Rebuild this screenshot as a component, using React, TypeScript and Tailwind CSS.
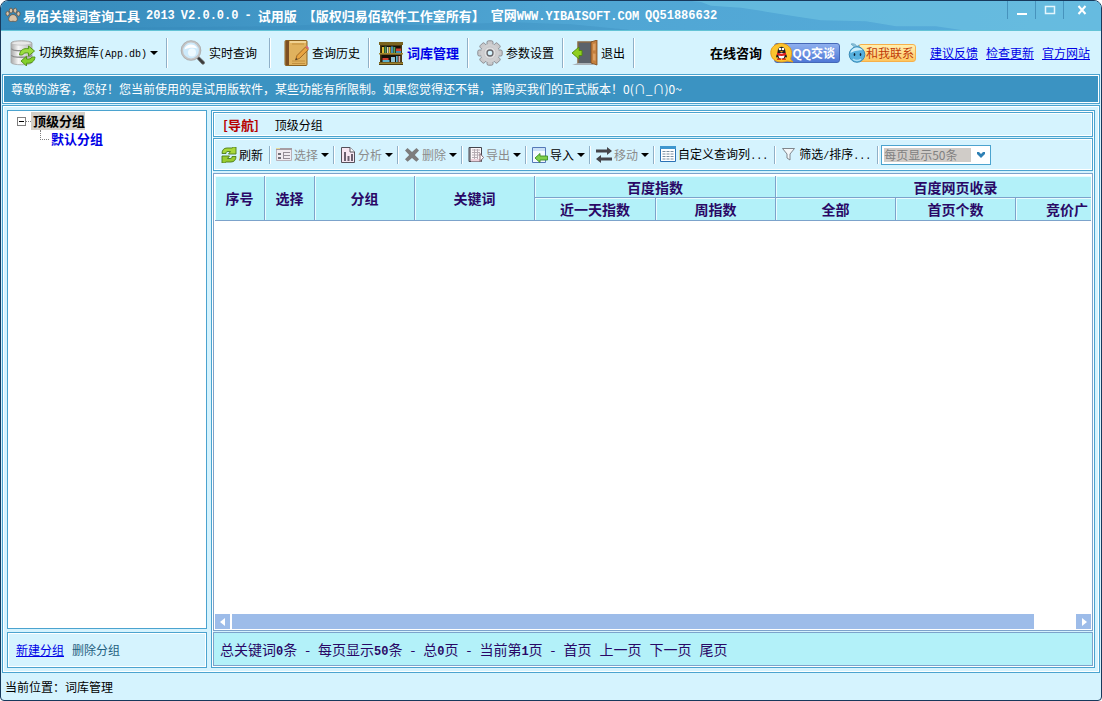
import React, { useState } from 'react';

interface ToolItem {
  label: string;
  icon: React.ReactNode;
  disabled?: boolean;
  menu?: boolean;
}

// Small black triangle used on every drop-down button
const Caret = () => (
  <svg className="w-2 h-1 shrink-0" viewBox="0 0 8 4">
    <path d="M0 0h8L4 4z" fill="#000" />
  </svg>
);

const Separator = () => <span className="h-full w-0.5 shrink-0 border-l border-[#8fb0c8] bg-white" />;

const Mono = ({ children }: { children: React.ReactNode }) => (
  <span className="font-['Liberation_Mono',monospace] text-[10px]">{children}</span>
);

/* ---------- Main toolbar icons ---------- */

const PawIcon = () => (
  <svg className="w-4 h-4 shrink-0" viewBox="0 0 16 16">
    <g fill="#d9c3a8" stroke="#5d5348" strokeWidth="0.8">
      <ellipse cx="2.6" cy="6.6" rx="1.7" ry="2.3" />
      <ellipse cx="6" cy="3.6" rx="1.7" ry="2.5" />
      <ellipse cx="10.2" cy="3.6" rx="1.7" ry="2.5" />
      <ellipse cx="13.4" cy="6.8" rx="1.7" ry="2.3" />
      <path d="M8 7.5c2.6 0 4.8 3 4.3 5.4-.4 1.8-2.4 1.8-4.3 1.3-1.9.5-3.9.5-4.3-1.3C3.200 10.500 5.400 7.500 8 7.500z" />
    </g>
  </svg>
);

const DatabaseIcon = () => (
  <svg className="w-[26px] h-[26px] shrink-0" viewBox="0 0 26 26">
    <defs>
      <linearGradient id="db" x1="0" x2="1">
        <stop offset="0" stopColor="#a9a9a9" />
        <stop offset="0.35" stopColor="#f6f6f6" />
        <stop offset="1" stopColor="#b4b4b4" />
      </linearGradient>
    </defs>
    <path d="M1 3c0-3 21-3 21 0v19.500c0 3-21 3-21 0z" fill="url(#db)" stroke="#a4a4a4" strokeWidth="0.8" />
    <ellipse cx="11.500" cy="3.200" rx="9.800" ry="2" fill="#e9e9e9" stroke="#b5b5b5" strokeWidth="0.6" />
    <path d="M1.500 8.500c0 3 20 3 20 0M1.500 15c0 3 20 3 20 0" fill="none" stroke="#8c8c8c" strokeWidth="1.300" />
    <path d="M9.500 15c.5-5 4-7 9-6.300V6l6 5-6 5v-3c-3-.5-5 0-6 2z" fill="#9bdd40" stroke="#4c8f12" strokeWidth="0.9" />
    <path d="M25 17c-.5 5-4 6.500-8.500 6.200V26l-5.500-5 5.500-4.700v2.700c3 .3 4.500-.2 5.500-2z" fill="#84d02c" stroke="#4c8f12" strokeWidth="0.9" />
  </svg>
);

const SearchIcon = () => (
  <svg className="w-[26px] h-[26px] shrink-0" viewBox="0 0 26 26">
    <path d="M16.500 18l2-1.800 5.800 5.600c1 1.600-.8 3.200-2.300 2.200z" fill="#3c3c3c" stroke="#6d6d6d" strokeWidth="0.7" />
    <circle cx="11" cy="10.500" r="9" fill="#cdeafb" stroke="#c4c4c4" strokeWidth="2.200" />
    <circle cx="11" cy="10.500" r="9.900" fill="none" stroke="#999" strokeWidth="0.5" />
    <path d="M4.500 9.500C5.500 3.500 15 2.500 17.300 8.500 14 7 8 7.500 4.500 9.500z" fill="#fff" />
    <circle cx="12" cy="12.500" r="4" fill="#eefaff" />
  </svg>
);

const NotebookIcon = () => (
  <svg className="w-[26px] h-[26px] shrink-0" viewBox="0 0 26 26">
    <rect x="2" y="0.500" width="22" height="25" rx="1" fill="#e0b25e" stroke="#8a6220" />
    <path d="M2.500 1h3.500v24h-3.500z" fill="#7d4f22" />
    <path d="M9 4h12M9 21h13M9 23.500h13" stroke="#c2903e" />
    <path d="M7 1h16v2H7z" fill="#f1d393" />
    <path d="M12.500 20l1.500-4.500L22.500 7l2.800 2.600-8.600 8.700z" fill="#e9a440" stroke="#8d5716" strokeWidth="0.8" />
    <path d="M22.500 7l1.500-1.200 2 2.200-.8 1.600z" fill="#d86a7c" />
    <path d="M12.500 20l.7-2 1.300 1.200z" fill="#333" />
  </svg>
);

const BookshelfIcon = () => (
  <svg className="w-[26px] h-[26px] shrink-0" viewBox="0 0 26 26">
    <path d="M1 2h24v3h-1v17h1v3H1v-3h1V5H1z" fill="#4b3a12" />
    <path d="M1 2h24v3H1z" fill="#7a6420" />
    <path d="M3.500 6h19v7h-19zM3.500 15h19v7h-19z" fill="#171109" />
    <path d="M4 7h2v6H4zM11 7h1.500v6H11z" fill="#e0bd35" />
    <path d="M6.500 6.500h2v6.500h-2z" fill="#4f9d5a" />
    <path d="M9 7h1.500v6H9z" fill="#d8d8c0" />
    <path d="M13 6.500h2.200V13H13zM18 11h5v2h-5z" fill="#3e8fb8" />
    <path d="M15.500 7h1.800v6h-1.800z" fill="#5aa858" />
    <path d="M18 8.500h5V11h-5z" fill="#d2402f" />
    <path d="M4.500 18h6v2h-6z" fill="#d2402f" />
    <path d="M4.500 20h7v2h-7zM18 16h1.700v6H18z" fill="#5eb0c8" />
    <path d="M13 17h4v5h-4z" fill="#8fc3d6" />
    <path d="M20.500 16h1.700v6h-1.700z" fill="#d9a8a0" />
    <path d="M1 13h24v1.500H1zM1 22.500h24V24H1z" fill="#a08530" />
  </svg>
);

const GearIcon = () => (
  <svg className="w-[26px] h-[26px] shrink-0" viewBox="0 0 26 26">
    <g fill="#c9c9cb" stroke="#85858a" strokeWidth="0.9">
      {[0, 45, 90, 135].map((deg) => (
        <rect key={deg} x="10" y="0.800" width="6" height="24.400" rx="1.500" transform={`rotate(${deg} 13 13)`} />
      ))}
    </g>
    <circle cx="13" cy="13" r="9.200" fill="#cfcfd1" />
    <circle cx="13" cy="13" r="6" fill="#dededf" stroke="#c0c0c3" strokeWidth="0.7" />
    <circle cx="13" cy="13" r="3" fill="#d5f3fe" stroke="#66666b" strokeWidth="1.300" />
  </svg>
);

const ExitIcon = () => (
  <svg className="w-[26px] h-[26px] shrink-0" viewBox="0 0 26 26">
    <path d="M6 2h14v22H6z" fill="#5b626b" stroke="#8a6a45" strokeWidth="1.500" />
    <path d="M0 25l6-2h14l2 2z" fill="#a9b0b5" />
    <path d="M19 2l6-2v25l-6-2z" fill="#c4803e" stroke="#7c4a1c" strokeWidth="0.8" />
    <path d="M21 4l2.500-.7v7L21 10.500zM21 13.500l2.500.3v7l-2.500-.5z" fill="#dca062" />
    <path d="M0 13l7-6v3.500h3v5H7V19z" fill="#8fcf1f" stroke="#4f8a0c" strokeWidth="0.9" />
  </svg>
);

/* ---------- Grid toolbar icons ---------- */

const RefreshIcon = () => (
  <svg className="w-4 h-4 shrink-0" viewBox="0 0 16 16">
    <path d="M1 6.500C1 3 3 1 6 1h5l1.500-1H15v7H7.500l2-2.500H7c-1.500 0-2 .5-2 2z" fill="#a8d83a" stroke="#4a7a1a" strokeWidth="0.9" />
    <path d="M15 9.500c0 3.500-2 5.500-5 5.500H5l-1.500 1H1V9h7.500l-2 2.500H9c1.500 0 2-.5 2-2z" fill="#98cc30" stroke="#4a7a1a" strokeWidth="0.9" />
  </svg>
);

const SelectIcon = () => (
  <svg className="w-4 h-4 shrink-0" viewBox="0 0 16 16">
    <path d="M0.500 1.500h15v12H.5z" fill="#f0ebf0" stroke="#b9b1b9" />
    <path d="M0 1h16v2H0z" fill="#a79da3" />
    <path d="M0 1h4v1H0z" fill="#e6dc9a" />
    <path d="M2 6h3v2H2zM2 10h3v2H2z" fill="#707078" />
    <path d="M7 5.500h7M7 8.500h7M7 11.500h7M7.500 5.500v6" stroke="#948d95" />
  </svg>
);

const ChartIcon = () => (
  <svg className="w-4 h-4 shrink-0" viewBox="0 0 16 16">
    <path d="M1.500.5h8.500l4.500 4.500v10.500h-13z" fill="#f6e6f1" stroke="#55505a" />
    <path d="M10 .5V5h4.500" fill="#fff" stroke="#55505a" />
    <path d="M4 5h2v9H4zM7.500 9h2v5h-2zM11 7h2v7h-2z" fill="#6a5f6e" />
  </svg>
);

const DeleteIcon = () => (
  <svg className="w-4 h-4 shrink-0" viewBox="0 0 16 16">
    <path d="M1 3.500L3.500 1 8 5l4.500-4L15 3.500 10.800 8l4.200 4.200-2.600 2.600L8 11l-4.400 3.800L1 12.200 5.200 8z" fill="#7d7d7d" />
  </svg>
);

const ExportIcon = () => (
  <svg className="w-4 h-4 shrink-0" viewBox="0 0 16 16">
    <path d="M1 .5h12.500v14H1z" fill="#fbf5f8" stroke="#44444c" />
    <path d="M2 1v13" stroke="#55555d" strokeWidth="1.200" />
    <path d="M4 3h8M4 5.500h8M4 8h8M4 10.500h6M6.500 2v10M9.500 2v10" stroke="#b5acb3" />
    <path d="M3 12h10v2.500H3z" fill="#ecd0da" />
    <path d="M12 6.500l3.500 4-3.500 4z" fill="#fff" stroke="#7d5c68" strokeWidth="0.9" />
  </svg>
);

const ImportIcon = () => (
  <svg className="w-4 h-4 shrink-0" viewBox="0 0 16 16">
    <path d="M.5.500h13v15H.5z" fill="#f4faff" stroke="#5579b8" />
    <path d="M1 1h12v3H1z" fill="#c9e1f7" />
    <path d="M3 11l5-4.500V9h7.500v4H8v2.500z" fill="#7ed04a" stroke="#3b8d22" strokeWidth="0.9" />
  </svg>
);

const MoveIcon = () => (
  <svg className="w-4 h-4 shrink-0" viewBox="0 0 16 16">
    <path d="M0 2.500h11V0L16 4l-5 4V5.500H0zM16 10.500H5V8L0 12l5 4V13.500h11z" fill="#45454a" />
  </svg>
);

const ColumnsIcon = () => (
  <svg className="w-4 h-4 shrink-0" viewBox="0 0 16 16">
    <path d="M.5.500h15v15H.5z" fill="#fff" stroke="#2a72b5" />
    <path d="M0 0h16v3H0z" fill="#3e97cf" />
    <path d="M2.500 5.500h3M6.500 5.500h3M10.500 5.500h3M2.500 8h3M6.500 8h3M10.500 8h3M2.500 10.500h3M6.500 10.500h3M10.500 10.500h3M2.500 13h3M6.500 13h3M10.500 13h3" stroke="#7a8ea0" />
  </svg>
);

const FilterIcon = () => (
  <svg className="w-4 h-4 shrink-0" viewBox="0 0 16 16">
    <path d="M1.500 2.500h12L9 8v6l-3-2V8z" fill="#f4f7f9" stroke="#80868c" />
  </svg>
);

/* ---------- Contact badges ---------- */

const PenguinIcon = () => (
  <svg className="w-6 h-5 shrink-0 relative" viewBox="0 0 24 20">
    <path d="M11 .5c6 0 10.500 4 10.500 9 0 3-.5 5-1 6.500l2.500 3-6-1c-1.500.8-3.500 1-6 1C5 19 .8 15 .8 9.500.8 4.500 5 .5 11 .5z" fill="#fcc42e" stroke="#e09a18" />
    <path d="M6 14.500c0-2.500 1.500-3.500 1.500-5.500 0-7 8-7 8 0 0 2 1.500 3 1.500 5.500l-1.500-.5-1 2h-6l-1-2z" fill="#1a1a1a" />
    <ellipse cx="11.500" cy="12.800" rx="3" ry="3" fill="#fff" />
    <path d="M7 9.500c3 1.500 6 1.500 9 0v2.500c-3 1.300-6 1.300-9 0z" fill="#e02020" />
    <circle cx="10" cy="6" r="1.300" fill="#fff" />
    <circle cx="13" cy="6" r="1.300" fill="#fff" />
    <path d="M9.500 8h4l-2 1.200z" fill="#f5a31a" />
    <path d="M7 15.500h4V17H7zM12 15.500h4V17h-4z" fill="#e83a14" />
  </svg>
);

const WangIcon = () => (
  <svg className="w-[18px] h-5 shrink-0 relative" viewBox="0 0 18 20">
    <path d="M7 5C6 2.500 4 2.500 3 1c2.500-1 5 .5 6 2.500l2-1.500c0 1.500.5 2 .5 3" fill="#8cc5dd" stroke="#6aa5c2" strokeWidth="0.8" />
    <circle cx="9" cy="11.500" r="7.800" fill="#56b0de" stroke="#3a8ab5" />
    <path d="M2.500 10c.5-6 9-7.500 12-3-3 .5-8 .5-12 3z" fill="#cdeefb" />
    <ellipse cx="6.500" cy="11.500" rx="0.800" ry="1.600" fill="#123" />
    <ellipse cx="12.500" cy="11.500" rx="0.800" ry="1.600" fill="#123" />
    <path d="M5 16c2 2 6 2 8 0" stroke="#a9def5" strokeWidth="1.500" fill="none" />
  </svg>
);

const gridTools: ToolItem[] = [
  { label: '选择', icon: <SelectIcon />, disabled: true, menu: true },
  { label: '分析', icon: <ChartIcon />, disabled: true, menu: true },
  { label: '删除', icon: <DeleteIcon />, disabled: true, menu: true },
  { label: '导出', icon: <ExportIcon />, disabled: true, menu: true },
  { label: '导入', icon: <ImportIcon />, menu: true },
  { label: '移动', icon: <MoveIcon />, disabled: true, menu: true },
];

const TitleBar = () => (
  <header className="relative h-[30px] shrink-0 flex items-center border-b border-[#63c3d6] bg-linear-to-r from-[#3489ba] via-[#4fa5d3] to-[#58addb] text-white">
    <svg className="absolute inset-0 w-full h-full" viewBox="0 0 1100 30" preserveAspectRatio="none">
      <path d="M690 0h410v30H960l-25-4h-40l-30-5-45-1-25-4-30-5-25-4-30-2-10-4z" fill="#70c4e2" opacity="0.6" />
      <path d="M0 29l20-2 60 1 200-2 60-3 90 2 80-3 60 2 60 6z" fill="#2c7fb0" opacity="0.2" />
    </svg>
    <div className="relative flex flex-1 items-center gap-[6px] pl-1 text-[13px] font-bold whitespace-nowrap">
      <h1 className="flex items-center gap-0.5">
        <PawIcon />
        易佰关键词查询工具
      </h1>
      <span className="font-['Liberation_Mono',monospace] text-xs">2013</span>
      <span className="font-['Liberation_Mono',monospace] text-xs">V2.0.0.0</span>
      <span className="font-['Liberation_Mono',monospace] text-xs">-</span>
      <span>试用版</span>
      <span>【版权归易佰软件工作室所有】</span>
      <span>
        官网<span className="font-['Liberation_Mono',monospace] text-xs">WWW.YIBAISOFT.COM</span>
      </span>
      <span className="font-['Liberation_Mono',monospace] text-xs">QQ51886632</span>
    </div>
    <div className="relative flex self-start h-[18px] pr-0.5">
      <button aria-label="最小化" className="w-7 flex justify-center items-center border-l border-[#4793bd]">
        <svg className="w-3 h-3" viewBox="0 0 12 12"><path d="M1 9h10v2H1z" fill="#fff" /></svg>
      </button>
      <button aria-label="最大化" className="w-7 flex justify-center items-center border-l border-[#4793bd]">
        <svg className="w-3 h-3" viewBox="0 0 12 12"><path d="M1.500 2.500h9v7h-9z" fill="none" stroke="#e4f5fc" strokeWidth="1.500" /></svg>
      </button>
      <button aria-label="关闭" className="w-9 flex justify-center items-center border-l border-[#4793bd]">
        <svg className="w-3 h-3" viewBox="0 0 12 12"><path d="M2.500 2l7 8M9.500 2l-7 8" stroke="#fff" strokeWidth="2" /></svg>
      </button>
    </div>
  </header>
);

const MainToolbar = () => (
  <nav className="h-[43px] shrink-0 flex items-center whitespace-nowrap">
    <div className="flex h-[30px] items-center">
      <button className="flex items-center gap-[3px] pl-[9px] pr-2">
        <DatabaseIcon />
        <span>切换数据库<Mono>(App.db)</Mono></span>
        <Caret />
      </button>
      <Separator />
      <button className="flex items-center gap-[3px] px-3"><SearchIcon />实时查询</button>
      <Separator />
      <button className="flex items-center gap-[3px] pl-3 pr-2"><NotebookIcon />查询历史</button>
      <Separator />
      <button className="flex items-center gap-[3px] px-2 text-[13px] font-bold text-[#0000e6]"><BookshelfIcon />词库管理</button>
      <Separator />
      <button className="flex items-center gap-[3px] px-2"><GearIcon />参数设置</button>
      <Separator />
      <button className="flex items-center gap-[3px] px-2"><ExitIcon />退出</button>
      <Separator />
    </div>
    <div className="ml-auto flex items-center gap-2 pr-[11px]">
      <span className="text-[13px] font-bold">在线咨询</span>
      <a href="#qq" className="flex items-center">
        <PenguinIcon />
        <span className="-ml-5 h-5 w-[66px] rounded-[3px] border border-[#4468b8] bg-linear-to-b from-[#8fb0ee] to-[#4f78d6] pr-1 text-right text-xs leading-[18px] font-bold text-white">QQ交谈</span>
      </a>
      <a href="#contact" className="mr-1.5 flex items-center">
        <WangIcon />
        <span className="-ml-2 h-[18px] w-[58px] rounded-[3px] border border-[#f7b04a] bg-linear-to-b from-[#fff0b0] to-[#fdc55e] pr-px text-right leading-4 text-[#c03a08]">和我联系</span>
      </a>
      <a href="#feedback" className="text-[#0000e6] underline">建议反馈</a>
      <a href="#update" className="text-[#0000e6] underline">检查更新</a>
      <a href="#home" className="text-[#0000e6] underline">官方网站</a>
    </div>
  </nav>
);

// Left column: keyword group tree
const GroupPanel = () => {
  const [open, setOpen] = useState(true);

  return (
    <aside className="flex w-[200px] shrink-0 flex-col gap-[3px]">
      <div className="flex-1 border border-[#4ba3cf] bg-white pt-px pl-[9px] text-[13px] font-bold leading-[18px]">
        <div className="flex items-center">
          <button
            aria-label="展开或折叠"
            onClick={() => setOpen(!open)}
            className="flex h-[9px] w-[9px] items-center justify-center border border-[#808080]"
          >
            <span className="h-px w-[5px] bg-black" />
          </button>
          <span className="w-[5px] border-t border-dotted border-[#808080]" />
          <span className="bg-[#d4d0c8] pl-0.5">顶级分组</span>
        </div>
        {open && (
          <div className="flex pl-[23px]">
            <span className="mr-0.5 h-[10px] w-[9px] border-b border-l border-dotted border-[#808080]" />
            <span className="text-[#0000e6]">默认分组</span>
          </div>
        )}
      </div>
      <div className="flex h-9 items-center gap-2 border border-[#4ba3cf] pl-2 shadow-[inset_0_0_0_1px_#fff]">
        <a href="#new" className="text-[#0000e6] underline">新建分组</a>
        <span className="text-[#1f6080]">删除分组</span>
      </div>
    </aside>
  );
};

const GridToolbar = () => (
  <div className="flex h-[33px] shrink-0 items-center border border-[#4ba3cf] pl-[7px] whitespace-nowrap shadow-[inset_0_0_0_1px_#fff]">
    <div className="flex h-[18px] items-center">
      <button className="flex items-center gap-0.5 pr-1.5"><RefreshIcon />刷新</button>
      <Separator />
      {gridTools.map((tool) => (
        <React.Fragment key={tool.label}>
          <button
            disabled={tool.disabled}
            className={`flex items-center gap-[3px] pl-[5px] pr-1 ${tool.disabled ? 'text-[#8b8b8b]' : 'text-black'}`}
          >
            <span className="flex items-center gap-0.5">{tool.icon}{tool.label}</span>
            {tool.menu && <Caret />}
          </button>
          <Separator />
        </React.Fragment>
      ))}
      <button className="flex items-center gap-0.5 pl-[5px] pr-1.5">
        <ColumnsIcon />
        <span>自定义查询列<Mono>...</Mono></span>
      </button>
      <Separator />
      <button className="flex items-center gap-0.5 pl-[5px] pr-1.5">
        <FilterIcon />
        <span>筛选<Mono>/</Mono>排序<Mono>...</Mono></span>
      </button>
      <Separator />
    </div>
    <div className="ml-0.5 flex h-5 w-[110px] items-center border border-[#4ba3cf] bg-white pl-0.5">
      <select disabled aria-label="每页显示" className="h-[14px] w-[87px] appearance-none bg-[#d0ccc8] text-xs leading-[14px] text-[#808080] opacity-100">
        <option>每页显示50条</option>
      </select>
      <svg className="ml-1.5 w-2 h-1.5" viewBox="0 0 8 6"><path d="M0 0h2l2 2 2-2h2v2L4 6 0 2z" fill="#2f80b4" /></svg>
    </div>
  </div>
);

const thClass = 'border-r border-b border-[#7ca3cb] bg-[#b3f1f9] p-0 font-bold shadow-[inset_1px_1px_0_#e9fcff]';

const KeywordTable = () => (
  <div className="flex min-h-0 flex-1 flex-col border border-[#7ca3cb] bg-white p-px pt-0.5">
    <div className="flex-1 overflow-hidden">
      <table className="w-[921px] table-fixed border-separate border-spacing-0 text-[14px] leading-[18px] text-[#2a0866]">
        <colgroup>
          <col className="w-[50px]" />
          <col className="w-[50px]" />
          <col className="w-[100px]" />
          <col className="w-[120px]" />
          <col className="w-[121px]" />
          <col className="w-[120px]" />
          <col className="w-[120px]" />
          <col className="w-[120px]" />
          <col className="w-[120px]" />
        </colgroup>
        <thead>
          <tr className="h-[22px]">
            <th rowSpan={2} className={thClass}>序号</th>
            <th rowSpan={2} className={thClass}>选择</th>
            <th rowSpan={2} className={thClass}>分组</th>
            <th rowSpan={2} className={thClass}>关键词</th>
            <th colSpan={2} className={thClass}>百度指数</th>
            <th colSpan={3} className={thClass}>百度网页收录</th>
          </tr>
          <tr className="h-[23px]">
            <th className={thClass}>近一天指数</th>
            <th className={thClass}>周指数</th>
            <th className={thClass}>全部</th>
            <th className={thClass}>首页个数</th>
            <th className={thClass}>
              <div className="pl-[30px] text-left">竞价广</div>
            </th>
          </tr>
        </thead>
      </table>
    </div>
    {/* Horizontal scrollbar */}
    <div className="flex h-[15px] shrink-0">
      <button aria-label="向左滚动" className="flex w-[15px] items-center justify-center bg-[#9dbce9]">
        <svg className="w-1.5 h-2" viewBox="0 0 6 8"><path d="M5 0v8L0 4z" fill="#fff" /></svg>
      </button>
      <div className="flex-1 pl-0.5">
        <div className="h-full w-[95%] bg-[#9dbce9]" />
      </div>
      <button aria-label="向右滚动" className="flex w-[15px] items-center justify-center bg-[#9dbce9]">
        <svg className="w-1.5 h-2" viewBox="0 0 6 8"><path d="M1 0v8l5-4z" fill="#fff" /></svg>
      </button>
    </div>
  </div>
);

const Num = ({ children }: { children: React.ReactNode }) => (
  <b className="font-['Liberation_Mono',monospace] text-xs">{children}</b>
);

const Pager = () => (
  <footer className="flex h-[34px] shrink-0 items-center border border-[#7ca3cb] bg-[#b3f1f9] pl-1.5 text-[14px] whitespace-nowrap text-[#2a0866]">
    <div className="flex items-baseline gap-2 leading-5">
      <span>总关键词<Num>0</Num>条</span>
      <span>-</span>
      <span>每页显示<Num>50</Num>条</span>
      <span>-</span>
      <span>总<Num>0</Num>页</span>
      <span>-</span>
      <span>当前第<Num>1</Num>页</span>
      <span>-</span>
      <button>首页</button>
      <button>上一页</button>
      <button>下一页</button>
      <button>尾页</button>
    </div>
  </footer>
);

const App: React.FC = () => {
  return (
    <div className="flex min-h-screen flex-col bg-white text-xs text-black font-['Noto_Sans_CJK_SC',sans-serif]">
      <div className="flex flex-1 flex-col overflow-hidden rounded-t-lg rounded-b-sm border border-[#17395c] bg-[#d5f3fe]">
        <TitleBar />
        <MainToolbar />

        {/* Trial notice */}
        <div className="mx-px mb-px h-[30px] shrink-0 border border-[#4ba3cf] bg-white p-px">
          <p className="flex h-full items-center overflow-hidden bg-[#3b93c2] pl-[7px] whitespace-nowrap text-white">
            <span>尊敬的游客，您好！您当前使用的是试用版软件，某些功能有所限制。如果您觉得还不错，请购买我们的正式版本！0(∩_∩)0~</span>
          </p>
        </div>

        <main className="mx-px flex min-h-0 flex-1 gap-1 border border-[#4ba3cf] p-1 shadow-[inset_0_0_0_1px_#fff]">
          <GroupPanel />
          <section className="flex min-w-0 flex-1 flex-col gap-px border border-[#4ba3cf] p-px shadow-[inset_0_0_0_1px_#fff]">
            <div className="flex h-[25px] shrink-0 items-center gap-4 border border-[#4ba3cf] pl-[9px] shadow-[inset_0_0_0_1px_#fff]">
              <span className="text-[13px] font-bold text-[#b80000]">[导航]</span>
              <span>顶级分组</span>
            </div>
            <GridToolbar />
            <div className="flex min-h-0 flex-1 flex-col pt-px">
              <KeywordTable />
            </div>
            <Pager />
          </section>
        </main>

        <div className="flex h-[27px] shrink-0 items-center pl-1">当前位置：词库管理</div>
      </div>
    </div>
  );
};

export default App;
